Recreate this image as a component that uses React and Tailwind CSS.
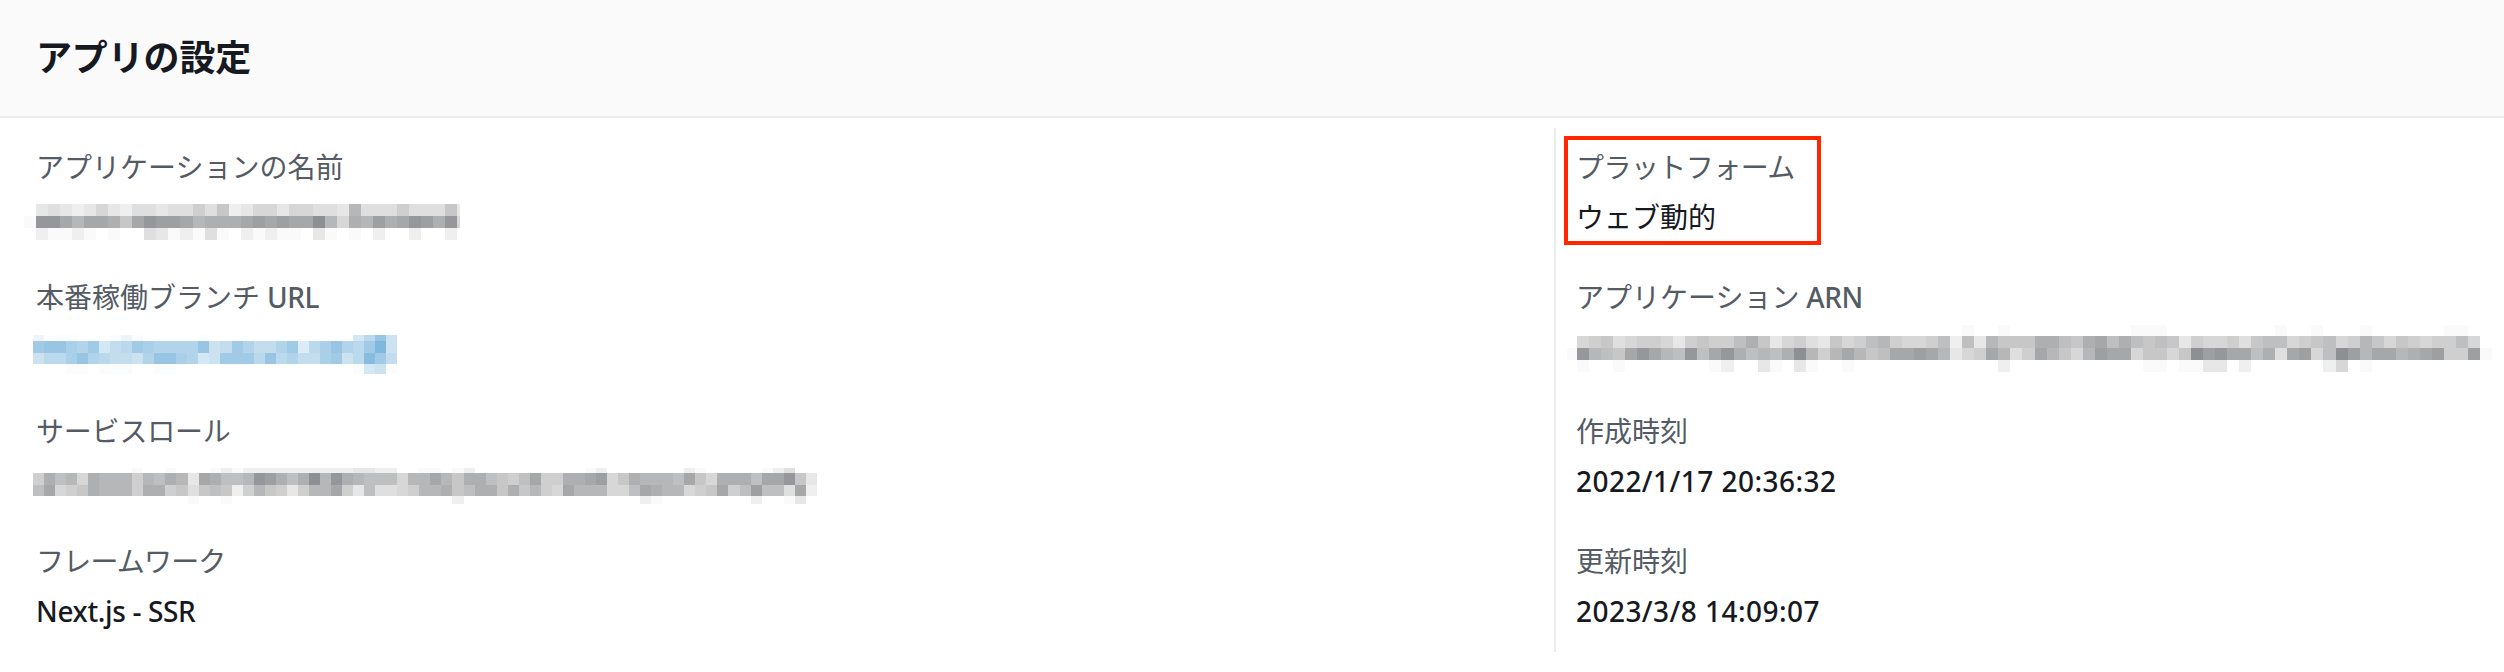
const sparse = (length, cells) =>
  Array.from({ length }, (_, i) => (cells[i] ?? 0).toString(16)).join('');

const GRAY = [134, 135, 138];
const BLUE = [127, 183, 221];

const appName = {
  pitch: 12.04,
  lead: 12,
  tops: [0, 12, 24, 36],
  maxWidth: 436,
  color: GRAY,
  rows: [
    '0343235324434464723553554439444644473',
    '1ddb9bba7bdccb9aaabcbcbbe95a9cabdcad5',
    '0211210100431214102121103101020020020',
  ],
};

const branchUrl = {
  pitch: 11.03,
  lead: 11,
  tops: [0, 6, 17.5, 28.5, 39],
  color: BLUE,
  rows: [
    sparse(33, { 0: 2, 2: 1, 3: 1, 7: 1, 8: 2, 9: 1, 15: 1, 29: 5, 30: 8, 31: 12, 32: 6 }),
    'bcca9b578ba9999c67b9779b48ac98bf6',
    '688ac987769cca956bbb8c8977ab68eb7',
    sparse(33, { 3: 1, 4: 1, 6: 1, 7: 1, 8: 1, 11: 1, 12: 1, 29: 1, 30: 5, 31: 6, 32: 1 }),
  ],
};

const serviceRole = {
  pitch: 11.04,
  lead: 11,
  tops: [0, 5, 16.5, 27.7, 35.7],
  color: GRAY,
  rows: [
    sparse(71, {
      9: 1, 12: 1, 16: 1, 17: 2, 18: 1, 19: 2, 20: 2, 21: 2, 22: 2, 23: 2, 24: 2, 25: 2, 26: 2, 27: 2,
      28: 2, 29: 3, 30: 3, 31: 2, 32: 2, 35: 1, 36: 1, 38: 1, 39: 2, 50: 1, 51: 2, 59: 2, 60: 1,
      66: 1, 67: 2, 68: 4,
    }),
    '6a895a999698a93ba889dca8ae9da98885' + '99b97aa8768b66aabc57a9998b75aaa8bbd73',
    '8b567a9996aa674787269763699b638445' + '699a78aa7a7965b999558ba99567b68c884b2',
    sparse(71, { 14: 1, 17: 1, 38: 2, 55: 2, 56: 1, 65: 2, 68: 1, 69: 3 }),
  ],
};

const appArn = {
  pitch: 12.04,
  lead: 10,
  tops: [0, 11, 23, 35, 47],
  color: GRAY,
  rows: [
    sparse(77, { 33: 1, 36: 1, 47: 1, 48: 1, 49: 1, 59: 1, 62: 1, 66: 1, 73: 1, 74: 1 }),
    '0567456653676' + '68a7356437568965568283977' + '7aa87ab8a878736556478856785697576566850',
    '1d987bdb98d8b' + 'da898ae969b978bbcb9356b94' + '6b9759cbb57757ecdbb8a4bc58ec9bb9abc66c1',
    sparse(77, {
      1: 1, 4: 1, 12: 1, 13: 2, 16: 3, 17: 1, 19: 3, 20: 1, 23: 1, 36: 2, 48: 1, 49: 1, 51: 1,
      52: 1, 53: 3, 54: 3, 56: 2, 63: 2, 64: 5, 66: 1,
    }),
  ],
};

function Mosaic({ data, className }) {
  const { pitch, lead, tops, color, rows, maxWidth } = data;
  const count = Math.max(...rows.map((r) => r.length));
  const left = (i) => (i === 0 ? 0 : Math.round(lead + (i - 1) * pitch));
  const width = maxWidth ?? left(count);
  const height = tops[tops.length - 1];
  return (
    <svg width={width} height={height} className={`block shrink-0 ${className}`} shapeRendering="crispEdges" aria-hidden="true">
      {rows.flatMap((row, r) =>
        [...row].map((ch, c) => {
          const step = parseInt(ch, 16);
          if (!step) return null;
          const level = (step === 1 ? 0.6 : step) / 15;
          const fill = `rgb(${color.map((v) => Math.round(255 - (255 - v) * level)).join(',')})`;
          return (
            <rect key={`${r}-${c}`} x={left(c)} y={tops[r]} width={left(c + 1) - left(c)} height={tops[r + 1] - tops[r]} fill={fill} />
          );
        }),
      )}
    </svg>
  );
}

function Kana({ children, className = '' }) {
  return <span className={`font-normal ${className}`}>{children}</span>;
}

function Field({ label, children, className = 'h-[130px]' }) {
  return (
    <div className={className}>
      <dt className="h-[50px] text-[28px] leading-[44px] text-[#545b64]">{label}</dt>
      <dd className="h-11 text-[28px] leading-[44px] text-[#16191f]">{children}</dd>
    </div>
  );
}

export default function App() {
  return (
    <section className="h-[672px] w-full overflow-hidden bg-white font-['Noto_Sans','Noto_Sans_CJK_JP',sans-serif] font-medium whitespace-nowrap">
      <header className="flex h-[118px] items-center border-b-2 border-[#eaeded] bg-[#fafafa] px-9">
        <h2 className="text-[36px] leading-[44px] font-bold tracking-[-0.15px] text-[#16191f]">アプリの設定</h2>
      </header>
      <div className="mt-2.5 flex h-[524px]">
        <dl className="w-[1554px] pt-[17px] pl-9">
          <Field label={<Kana>アプリケーションの名前</Kana>}>
            <Mosaic data={appName} className="relative top-[9px] -left-3" />
          </Field>
          <Field
            label={<><Kana>本番稼働ブランチ</Kana><span className="tracking-[-0.4px]"> URL</span></>}
            className="h-[134px]"
          >
            <Mosaic data={branchUrl} className="relative top-[10px] -left-[3px]" />
          </Field>
          <Field label={<Kana className="tracking-[-0.2px]">サービスロール</Kana>}>
            <Mosaic data={serviceRole} className="relative top-[9px] -left-[3px]" />
          </Field>
          <Field label={<Kana className="tracking-[-0.8px]">フレームワーク</Kana>}>
            <span className="tracking-[-0.35px]">Next.js - SSR</span>
          </Field>
        </dl>
        <dl className="relative flex-1 border-l-2 border-[#eaeded] pt-[17px] pl-5">
          <Field label={<Kana className="tracking-[-0.55px]">プラットフォーム</Kana>}>
            <Kana>ウェブ動的</Kana>
          </Field>
          <Field
            label={<><Kana>アプリケーション</Kana><span className="tracking-[-0.4px]"> ARN</span></>}
            className="h-[134px]"
          >
            <Mosaic data={appArn} className="relative top-0 -left-[9px]" />
          </Field>
          <Field label={<Kana>作成時刻</Kana>}>
            <span className="tracking-[0.45px]">2022/1/17 20:36:32</span>
          </Field>
          <Field label={<Kana>更新時刻</Kana>}>
            <span className="tracking-[0.45px]">2023/3/8 14:09:07</span>
          </Field>
          <div className="absolute top-2 left-2 h-[109px] w-[257px] border-4 border-[#ff2600]" />
        </dl>
      </div>
    </section>
  );
}
